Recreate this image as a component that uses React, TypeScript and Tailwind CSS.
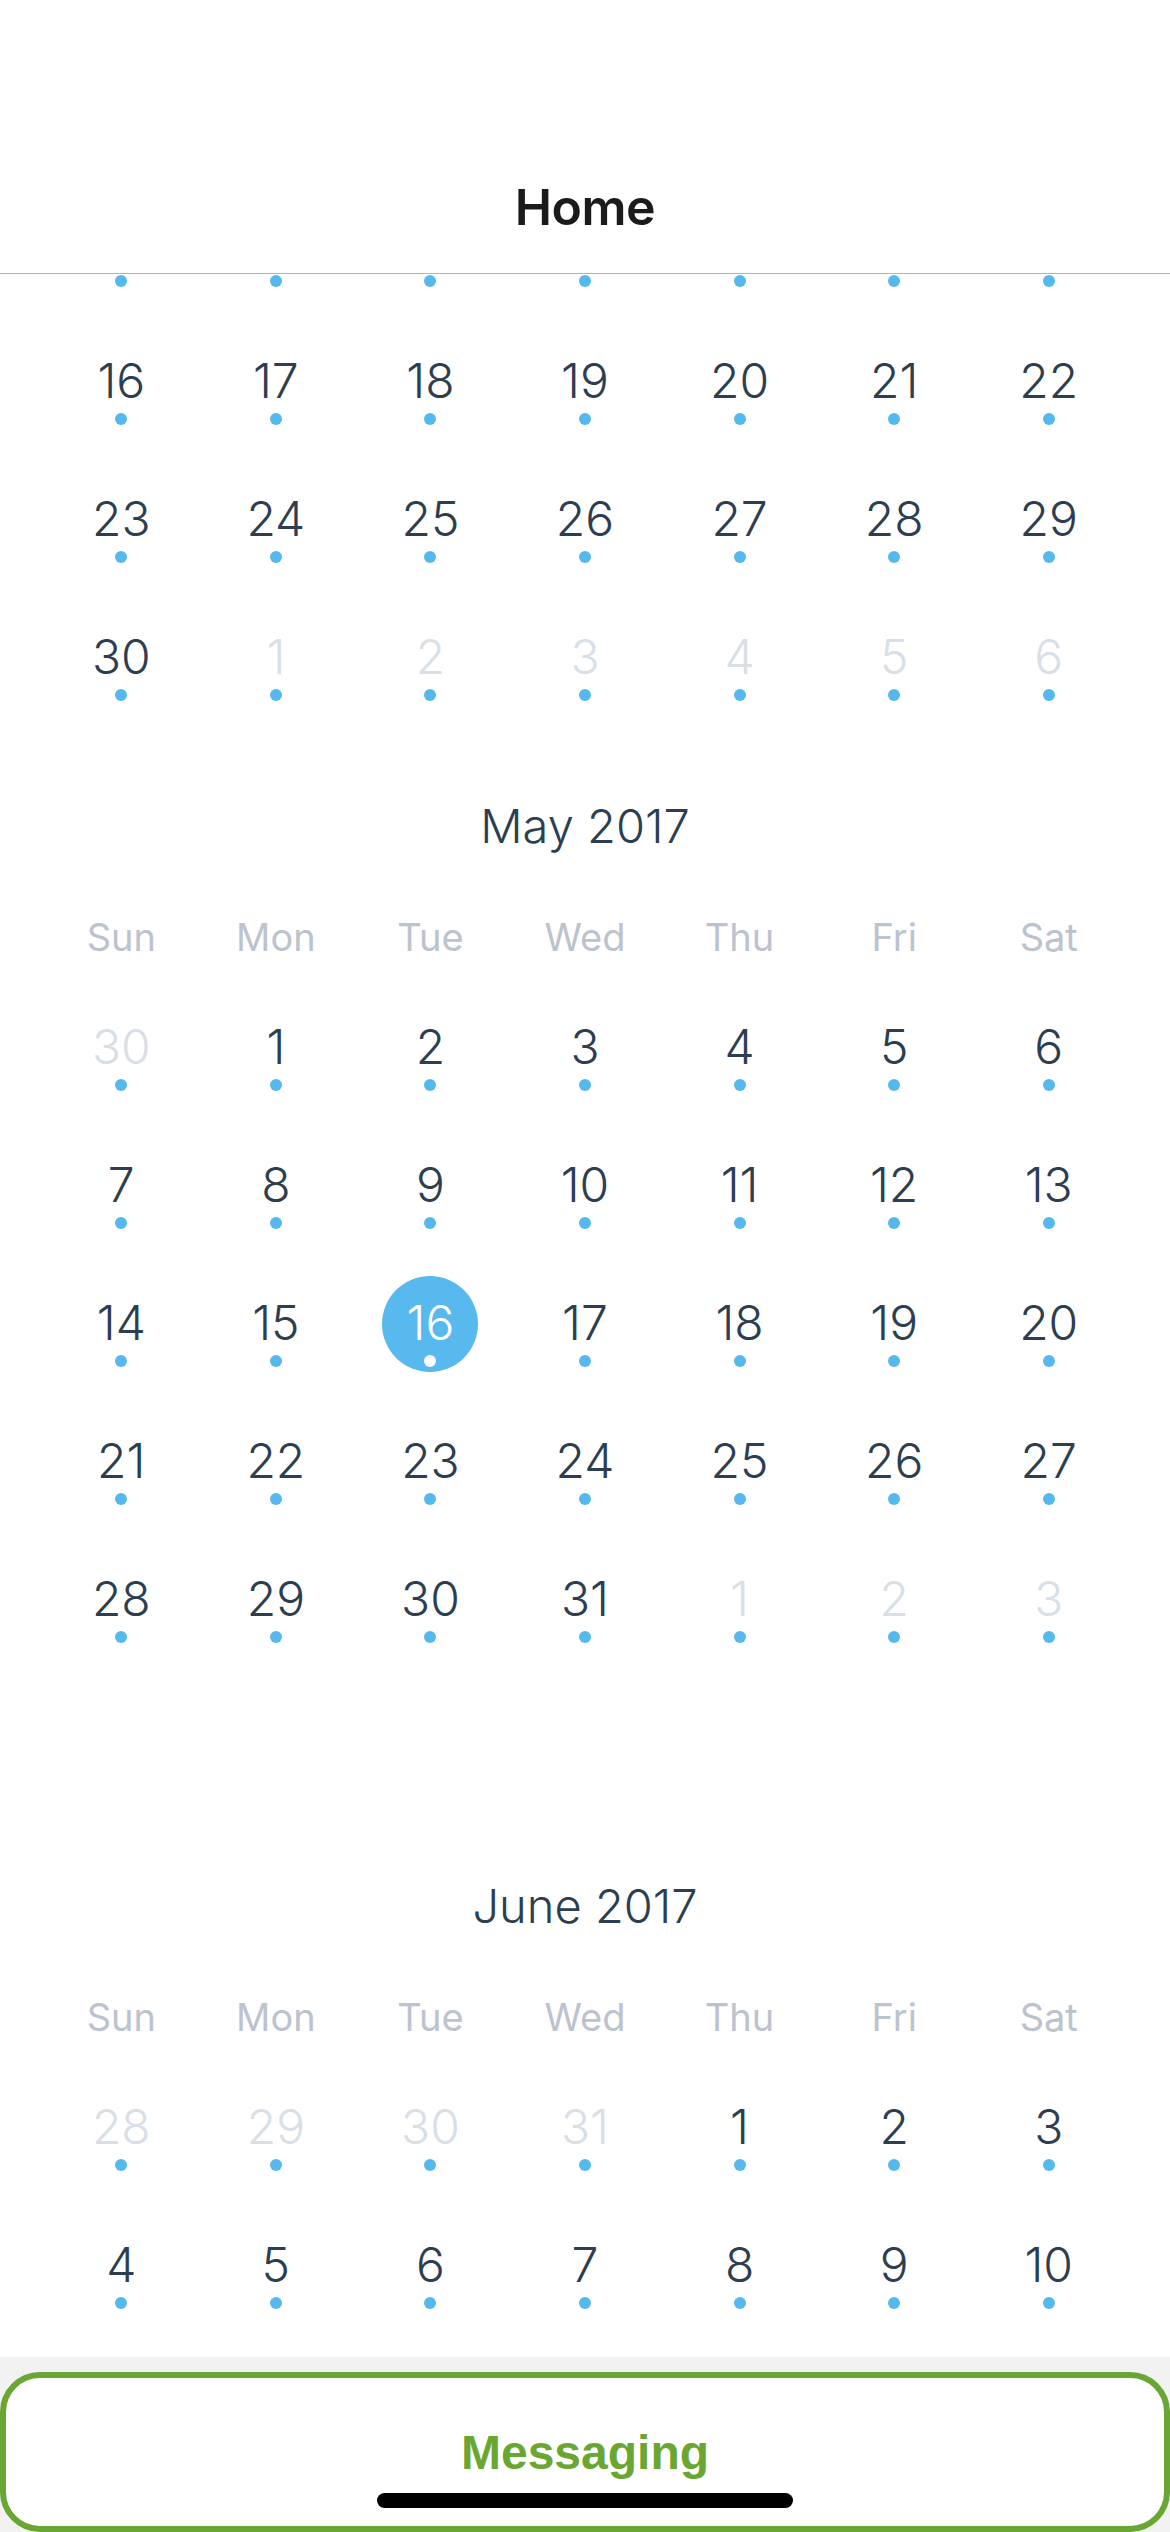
type Day = { day: number; faded: boolean };

const WEEKDAYS = ['Sun', 'Mon', 'Tue', 'Wed', 'Thu', 'Fri', 'Sat'];
const MONTH_NAMES = [
  'January', 'February', 'March', 'April', 'May', 'June',
  'July', 'August', 'September', 'October', 'November', 'December',
];

function buildWeeks(year: number, month: number): Day[][] {
  const first = new Date(year, month, 1).getDay();
  const daysInMonth = new Date(year, month + 1, 0).getDate();
  const daysInPrev = new Date(year, month, 0).getDate();
  const cells: Day[] = [];
  for (let i = first - 1; i >= 0; i--) cells.push({ day: daysInPrev - i, faded: true });
  for (let d = 1; d <= daysInMonth; d++) cells.push({ day: d, faded: false });
  let next = 1;
  while (cells.length % 7 !== 0) cells.push({ day: next++, faded: true });
  const weeks: Day[][] = [];
  for (let i = 0; i < cells.length; i += 7) weeks.push(cells.slice(i, i + 7));
  return weeks;
}

function DayCell({ day, faded, selected }: Day & { selected: boolean }) {
  return (
    <div className="flex h-[138px] justify-center pt-[2px]">
      <div
        className={`flex h-[96px] w-[96px] flex-col items-center rounded-full pt-[23px] ${
          selected ? 'bg-[#57b9ed]' : ''
        }`}
      >
        <span
          className={`text-[48px] font-light leading-[48px] ${
            selected ? 'text-white' : faded ? 'text-[#d9dfe7]' : 'text-[#2c3e50]'
          }`}
        >
          {day}
        </span>
        <span
          className={`mt-[8px] h-[12px] w-[12px] rounded-full ${selected ? 'bg-white' : 'bg-[#56b9ee]'}`}
        />
      </div>
    </div>
  );
}

interface MonthProps {
  year: number;
  month: number;
  selectedDay?: number;
  // the list is scrolled: only these weeks are on screen
  from?: number;
  to?: number;
  header?: boolean;
}

function Month({ year, month, selectedDay, from = 0, to = 6, header = true }: MonthProps) {
  const weeks = buildWeeks(year, month).slice(from, to);
  return (
    <div className={to >= 6 ? 'pb-[30px]' : ''}>
      {header && (
        <>
          <div className="flex h-[100px] items-center justify-center text-[47px] font-light text-[#2c3e50]">
            {MONTH_NAMES[month]} {year}
          </div>
          <div className="grid h-[122px] grid-cols-7 items-center px-[44px]">
            {WEEKDAYS.map((w) => (
              <div key={w} className="text-center text-[38px] leading-none text-[#bcc3cf]">
                {w}
              </div>
            ))}
          </div>
        </>
      )}
      <div className="px-[44px]">
        {Array.from({ length: to - from }, (_, wi) => (
          <div key={wi} className="grid h-[138px] grid-cols-7">
            {(weeks[wi] ?? []).map((d, di) => (
              <DayCell
                key={di}
                day={d.day}
                faded={d.faded}
                selected={!d.faded && d.day === selectedDay}
              />
            ))}
          </div>
        ))}
      </div>
    </div>
  );
}

export default function App() {
  return (
    <div className="flex h-[2532px] w-full flex-col overflow-hidden bg-white font-['Inter','Noto_Sans',sans-serif]">
      <header className="h-[274px] shrink-0 border-b border-[#b2b2b2] pt-[177px] text-center">
        <h1 className="text-[50px] font-semibold leading-[60px] tracking-[-0.5px] text-[#1b1b1d]">Home</h1>
      </header>

      <main className="flex-1 overflow-hidden">
        {/* dots of the April week that is scrolled under the header */}
        <div className="grid h-[58px] grid-cols-7 px-[44px] pt-[1px]">
          {Array.from({ length: 7 }, (_, i) => (
            <div key={i} className="flex justify-center">
              <span className="h-[12px] w-[12px] rounded-full bg-[#56b9ee]" />
            </div>
          ))}
        </div>
        <Month year={2017} month={3} from={3} to={6} header={false} />
        <Month year={2017} month={4} selectedDay={16} />
        <Month year={2017} month={5} from={0} to={2} />
      </main>

      <footer className="h-[175px] shrink-0 bg-[#f2f2f2] pt-[15px]">
        <div className="relative h-[160px] rounded-[40px] border-[6px] border-[#6aa632] bg-white pt-[47px] text-center">
          <span className="font-['Liberation_Sans','Arial',sans-serif] text-[48px] font-bold leading-[56px] text-[#6aa632]">
            Messaging
          </span>
          <div className="absolute bottom-[18px] left-1/2 h-[15px] w-[416px] -translate-x-1/2 rounded-full bg-black" />
        </div>
      </footer>
    </div>
  );
}
